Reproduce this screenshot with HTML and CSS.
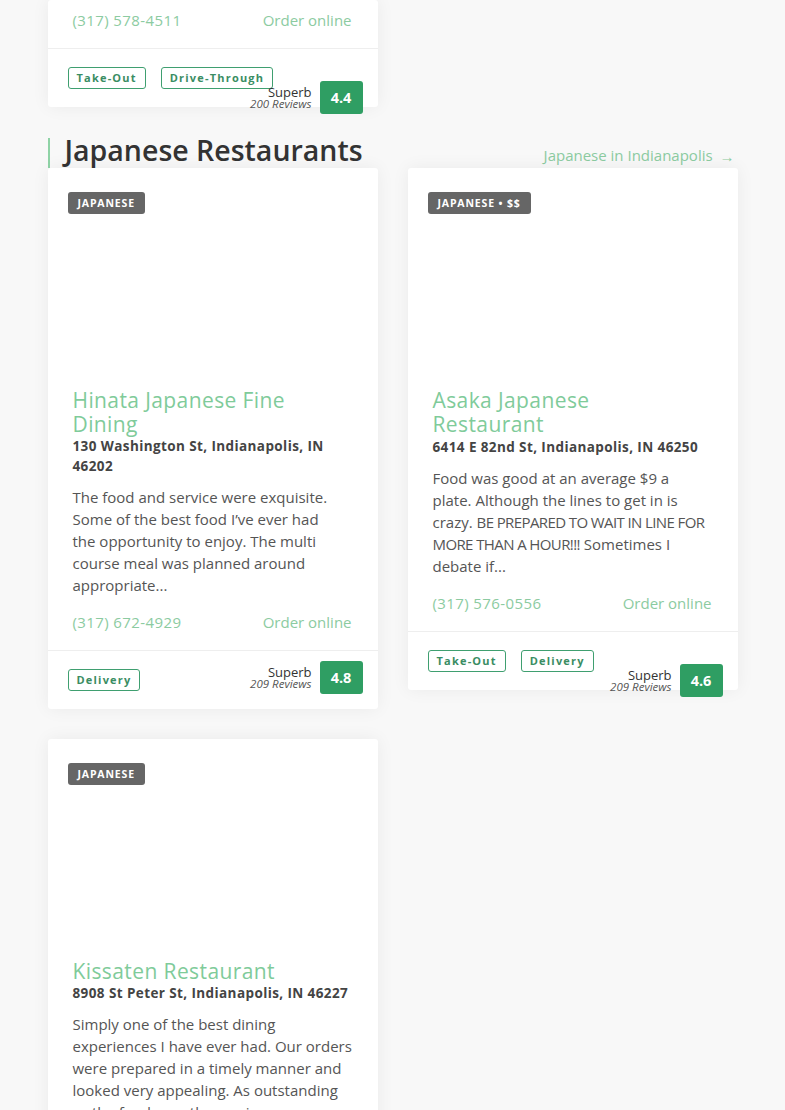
FILE: index.html
```html
<!DOCTYPE html>
<html lang="en">
<head>
<meta charset="utf-8">
<title>Japanese Restaurants</title>
<link rel="stylesheet" href="styles.css">
</head>
<body>
<div class="page">
  <section class="grid grid-top">
    <article class="card">
      <div class="contact contact-cut">
        <span class="phone">(317) 578-4511</span>
        <span class="order">Order online</span>
      </div>
      <div class="foot foot-stack">
        <div class="tags">
          <span class="tag">Take-Out</span>
          <span class="tag">Drive-Through</span>
        </div>
        <div class="rating">
          <div class="rating-text"><span class="rating-word">Superb</span><span class="rating-count">200 Reviews</span></div>
          <span class="score">4.4</span>
        </div>
      </div>
    </article>
  </section>

  <header class="section-head">
    <h2 class="section-title">Japanese Restaurants</h2>
    <a class="section-link" href="#">Japanese in Indianapolis <span class="arrow">→</span></a>
  </header>

  <section class="grid">
    <article class="card">
      <div class="media"><span class="label">Japanese</span></div>
      <div class="body">
        <h3 class="name">Hinata Japanese Fine<br>Dining</h3>
        <p class="address">130 Washington St, Indianapolis, IN<br>46202</p>
        <p class="desc">The food and service were exquisite.<br>Some of the best food I’ve ever had<br>the opportunity to enjoy. The multi<br>course meal was planned around<br>appropriate...</p>
      </div>
      <div class="contact">
        <span class="phone">(317) 672-4929</span>
        <span class="order">Order online</span>
      </div>
      <div class="foot">
        <div class="tags">
          <span class="tag">Delivery</span>
        </div>
        <div class="rating">
          <div class="rating-text"><span class="rating-word">Superb</span><span class="rating-count">209 Reviews</span></div>
          <span class="score">4.8</span>
        </div>
      </div>
    </article>

    <article class="card">
      <div class="media"><span class="label">Japanese • $$</span></div>
      <div class="body">
        <h3 class="name">Asaka Japanese<br>Restaurant</h3>
        <p class="address address-single">6414 E 82nd St, Indianapolis, IN 46250</p>
        <p class="desc">Food was good at an average $9 a<br>plate. Although the lines to get in is<br>crazy. <span class="caps">BE PREPARED TO WAIT IN LINE FOR</span><br><span class="caps">MORE THAN A HOUR!!!</span> Sometimes I<br>debate if...</p>
      </div>
      <div class="contact">
        <span class="phone">(317) 576-0556</span>
        <span class="order">Order online</span>
      </div>
      <div class="foot foot-stack">
        <div class="tags">
          <span class="tag">Take-Out</span>
          <span class="tag">Delivery</span>
        </div>
        <div class="rating">
          <div class="rating-text"><span class="rating-word">Superb</span><span class="rating-count">209 Reviews</span></div>
          <span class="score">4.6</span>
        </div>
      </div>
    </article>

    <article class="card">
      <div class="media"><span class="label">Japanese</span></div>
      <div class="body">
        <h3 class="name">Kissaten Restaurant</h3>
        <p class="address">8908 St Peter St, Indianapolis, IN 46227</p>
        <p class="desc">Simply one of the best dining<br>experiences I have ever had. Our orders<br>were prepared in a timely manner and<br>looked very appealing. As outstanding<br>as the food was, the service...</p>
      </div>
      <div class="contact">
        <span class="phone">(317) 885-2245</span>
        <span class="order">Order online</span>
      </div>
      <div class="foot">
        <div class="tags">
          <span class="tag">Delivery</span>
        </div>
        <div class="rating">
          <div class="rating-text"><span class="rating-word">Superb</span><span class="rating-count">209 Reviews</span></div>
          <span class="score">4.7</span>
        </div>
      </div>
    </article>
  </section>
</div>
</body>
</html>
```

FILE: styles.css
```css
* { box-sizing: border-box; }

html, body {
  margin: 0;
  padding: 0;
  background: #f8f8f8;
}

body {
  font-family: "Open Sans", "Noto Sans", sans-serif;
  color: #555;
}

.page {
  width: 690px;
  margin: 0 auto;
  padding-bottom: 40px;
}

.grid {
  display: grid;
  grid-template-columns: 330px 330px;
  column-gap: 30px;
  row-gap: 30px;
  align-items: start;
}

.grid-top {
  margin-bottom: 31px;
}

.card {
  background: #fff;
  border-radius: 3px;
  box-shadow: 0 0 18px rgba(0, 0, 0, 0.06);
}

.media {
  height: 210px;
  padding: 22px 20px;
}

.label {
  display: inline-block;
  height: 22px;
  line-height: 22px;
  padding: 0 10px;
  background: #666;
  color: #fff;
  border-radius: 3px;
  font-size: 10.5px;
  font-weight: 700;
  letter-spacing: 0.85px;
  text-transform: uppercase;
}

.body {
  padding: 10px 26px 0 25px;
}

.name {
  margin: 0;
  font-size: 21px;
  line-height: 24px;
  font-weight: 500;
  letter-spacing: 0.4px;
  color: #7fcb9a;
}

.address {
  margin: 0;
  font-size: 13.5px;
  line-height: 20px;
  font-weight: 700;
  color: #444;
  letter-spacing: 0.4px;
}

.address-single {
  margin-top: 1px;
}

.desc {
  margin: 10px 0 0;
  font-size: 15px;
  line-height: 22px;
  color: #555;
  white-space: nowrap;
}

.caps {
  letter-spacing: -0.6px;
}

.contact {
  display: flex;
  justify-content: space-between;
  padding: 15px 26px 17px 25px;
  line-height: 22px;
  font-size: 15px;
  font-weight: 400;
  color: #8ccba1;
  border-bottom: 1px solid #eee;
}

.phone {
  letter-spacing: 0.4px;
}

.contact-cut {
  padding-top: 9px;
}

.foot {
  height: 58px;
  padding: 10px 15px 0 20px;
  display: flex;
  flex-wrap: wrap;
  justify-content: space-between;
  align-items: flex-start;
}

.tags {
  display: flex;
  gap: 15px;
  margin-top: 8px;
}

.foot-stack .tags {
  width: 100%;
}

.foot-stack .rating {
  margin-left: auto;
  margin-top: -8px;
}

.tag {
  height: 22px;
  line-height: 20px;
  padding: 0 8px;
  border: 1px solid #3f9f70;
  border-radius: 3px;
  color: #3a8d63;
  font-size: 11px;
  font-weight: 700;
  letter-spacing: 1.2px;
}

.rating {
  display: flex;
  align-items: center;
  gap: 8px;
}

.rating-text {
  display: flex;
  flex-direction: column;
  align-items: flex-end;
  line-height: 12px;
}

.rating-word {
  font-size: 13px;
  color: #333;
}

.rating-count {
  font-size: 11.5px;
  font-style: italic;
  color: #555;
}

.score {
  width: 43px;
  height: 33px;
  line-height: 33px;
  text-align: center;
  background: #2f9e63;
  color: #fff;
  border-radius: 3px;
  font-size: 14.5px;
  font-weight: 700;
}

.section-head {
  height: 30px;
  display: flex;
  justify-content: space-between;
  align-items: baseline;
}

.section-title {
  margin: 0;
  height: 30px;
  line-height: 25px;
  padding-left: 15px;
  border-left: 2px solid #8fd3a6;
  font-size: 28.5px;
  font-weight: 600;
  color: #333;
}

.section-link {
  padding-right: 3px;
  font-size: 15px;
  font-weight: 400;
  color: #8ccba1;
  text-decoration: none;
}

.arrow {
  display: inline-block;
  margin-left: 3px;
  font-size: 15px;
  transform: translateY(1px);
}
```
